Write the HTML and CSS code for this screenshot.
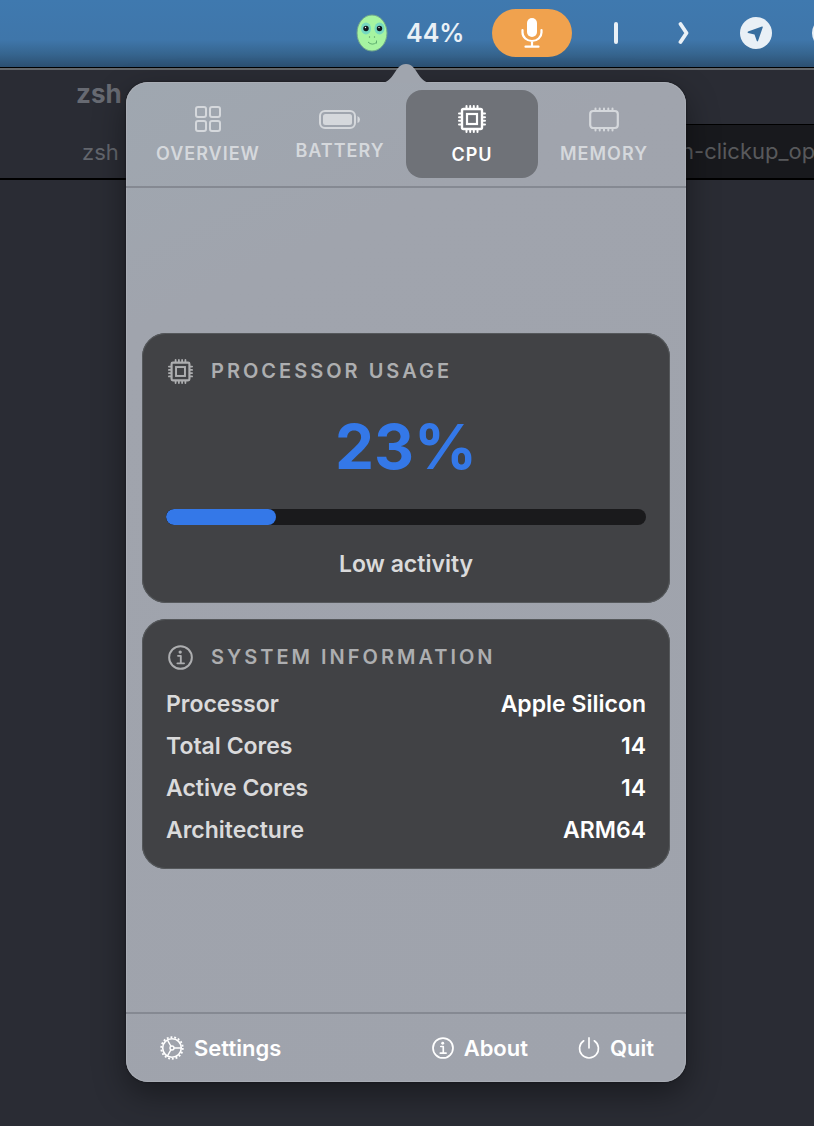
FILE: index.html
```html
<!DOCTYPE html>
<html lang="en">
<head>
<meta charset="utf-8">
<meta name="viewport" content="width=device-width, initial-scale=1">
<title>System Monitor</title>
<link rel="stylesheet" href="styles.css">
</head>
<body>
<svg class="defs" width="0" height="0" aria-hidden="true">
  <symbol id="chip" viewBox="0 0 28 28">
    <g fill="none" stroke="currentColor">
      <rect x="4" y="4" width="20" height="20" rx="1.5" stroke-width="2.4"/>
      <rect x="9" y="9" width="10" height="10" stroke-width="2.2"/>
      <path stroke-width="2" stroke-linecap="round" d="M8.500 1v2M12.200 1v2M15.800 1v2M19.500 1v2M8.500 25v2M12.200 25v2M15.800 25v2M19.500 25v2M1 8.500h2M1 12.200h2M1 15.800h2M1 19.500h2M25 8.500h2M25 12.200h2M25 15.800h2M25 19.500h2"/>
    </g>
  </symbol>
  <symbol id="info" viewBox="0 0 24 24">
    <circle cx="12" cy="12" r="10.9" fill="none" stroke="currentColor" stroke-width="1.9"/>
    <circle cx="11.7" cy="6.8" r="1.6" fill="currentColor"/>
    <path d="M9.6 10.4h2.7v7M9 17.6h6.4" fill="none" stroke="currentColor" stroke-width="1.8" stroke-linecap="round" stroke-linejoin="round"/>
  </symbol>
</svg>

<header class="menubar">
  <svg class="alien" viewBox="0 0 32 38" aria-label="Alien">
    <ellipse cx="16" cy="19" rx="15" ry="18" fill="#a6f4a1" stroke="#6fa58c"/>
    <ellipse cx="10" cy="14.500" rx="5" ry="6" fill="#75d8c0"/>
    <ellipse cx="23.500" cy="14.500" rx="5" ry="6" fill="#75d8c0"/>
    <circle cx="10" cy="14.500" r="2.700" fill="#10171b"/>
    <circle cx="23.500" cy="14.500" r="2.700" fill="#10171b"/>
    <circle cx="9.500" cy="13.500" r=".7" fill="#fff"/><circle cx="23" cy="13.500" r=".7" fill="#fff"/>
    <circle cx="13.500" cy="23" r=".7" fill="#5f9e67"/><circle cx="18.500" cy="23" r=".7" fill="#5f9e67"/>
    <path d="M12 28q4 4 8.500 .5M20.500 26.500v3" fill="none" stroke="#5faf70"/>
  </svg>
  <span class="level">44%</span>
  <button class="mic" aria-label="Microphone">
    <svg viewBox="0 0 22 30" fill="none" stroke="#fff" stroke-width="2.200" stroke-linecap="round">
      <rect x="6" y="0" width="10" height="19" rx="5" fill="#fff" stroke="none"/>
      <path d="M1.500 12v2.500a9.500 8.500 0 0 0 19 0V12M11 23v5.500M4.500 28.700h13"/>
    </svg>
  </button>
  <svg class="divider" viewBox="0 0 4 22"><path d="M2 2v18" stroke="#e9f0f6" stroke-width="4" stroke-linecap="round"/></svg>
  <svg class="chevron" viewBox="0 0 12 22"><path d="M2.500 2 L8.500 11 L2.500 20" fill="none" stroke="#e9f0f6" stroke-width="3.800" stroke-linecap="round" stroke-linejoin="round"/></svg>
  <svg class="round" viewBox="0 0 32 32"><circle cx="16" cy="16" r="16" fill="#e9f0f6"/><path d="M8 14.500 22 9.500q1-.2.800.8L18 24q-.6.900-1.200 0L14.500 17.500 8 16q-1-.8 0-1.500z" fill="#376e9f"/></svg>
  <svg class="round" viewBox="0 0 32 32"><circle cx="16" cy="16" r="16" fill="#e9f0f6"/></svg>
</header>

<main class="terminal">
  <h1 class="window-title">zsh</h1>
  <div class="window-tabs">
    <div class="window-tab current">zsh</div>
    <div class="window-tab other">h-clickup_op</div>
  </div>
</main>

<section class="popover" aria-label="System monitor">
  <svg class="pointer" viewBox="0 0 52 20"><path d="M0 20C15 20 14 1 26 1S37 20 52 20z" fill="#a0a5ae"/></svg>
  <nav class="tabs">
    <button class="tab">
      <svg width="26" height="26" viewBox="0 0 26 26" fill="none" stroke="currentColor" stroke-width="2"><rect x="1" y="1" width="10" height="10" rx="2"/><rect x="15" y="1" width="10" height="10" rx="2"/><rect x="1" y="15" width="10" height="10" rx="2"/><rect x="15" y="15" width="10" height="10" rx="2"/></svg>
      <span>OVERVIEW</span>
    </button>
    <button class="tab">
      <svg width="42" height="19" viewBox="0 0 42 19"><rect x="1" y="1" width="35" height="17" rx="5" fill="none" stroke="currentColor" stroke-width="2"/><rect x="4" y="4" width="29" height="11" rx="2.500" fill="currentColor"/><path d="M38.500 6v7q2.500-1 2.500-3.500T38.500 6z" fill="currentColor"/></svg>
      <span>BATTERY</span>
    </button>
    <button class="tab selected" aria-current="page">
      <svg width="28" height="28"><use href="#chip"/></svg>
      <span>CPU</span>
    </button>
    <button class="tab">
      <svg width="30" height="25" viewBox="0 0 30 25" fill="none" stroke="currentColor" stroke-linecap="round"><rect x="1.200" y="4" width="27.600" height="17" rx="3" stroke-width="2.200"/><path stroke-width="2" d="M6.500 1.500v2M10.700 1.500v2M15 1.500v2M19.300 1.500v2M23.500 1.500v2M6.500 21.500v2M10.700 21.500v2M15 21.500v2M19.300 21.500v2M23.500 21.500v2"/></svg>
      <span>MEMORY</span>
    </button>
  </nav>

  <div class="content">
    <section class="card">
      <h2 class="card-title"><svg class="card-icon" aria-hidden="true"><use href="#chip"/></svg>PROCESSOR USAGE</h2>
      <p class="usage">23%</p>
      <div class="meter" role="progressbar" aria-label="Processor usage" aria-valuenow="23" aria-valuemin="0" aria-valuemax="100"><div class="meter-fill" style="width: 23%"></div></div>
      <p class="activity">Low activity</p>
    </section>
    <section class="card">
      <h2 class="card-title"><svg class="card-icon" aria-hidden="true"><use href="#info"/></svg>SYSTEM INFORMATION</h2>
      <dl class="facts">
        <div class="fact"><dt>Processor</dt><dd>Apple Silicon</dd></div>
        <div class="fact"><dt>Total Cores</dt><dd>14</dd></div>
        <div class="fact"><dt>Active Cores</dt><dd>14</dd></div>
        <div class="fact"><dt>Architecture</dt><dd>ARM64</dd></div>
      </dl>
    </section>
  </div>

  <footer class="actions">
    <button class="action settings">
      <svg viewBox="0 0 24 24" fill="none" stroke="currentColor"><circle cx="12" cy="12" r="9.300" stroke-width="1.600"/><circle cx="12" cy="12" r="10.800" stroke-width="1.800" stroke-dasharray="1.900 1.870"/><circle cx="12" cy="12" r="2" stroke-width="1.400"/><path stroke-width="1.400" d="M14 12h7M11 10.300 7.500 4.200M11 13.700 7.500 19.800"/></svg>
      Settings
    </button>
    <button class="action">
      <svg class="small" viewBox="0 0 24 24"><use href="#info"/></svg>
      About
    </button>
    <button class="action">
      <svg class="small" viewBox="0 0 24 24" fill="none" stroke="currentColor" stroke-width="1.800" stroke-linecap="round"><path d="M12 1v11M6.200 4.100a10.300 10.300 0 1 0 11.600 0"/></svg>
      Quit
    </button>
  </footer>
</section>
</body>
</html>
```
FILE: styles.css
```css
* { box-sizing: border-box; }

body {
  margin: 0;
  min-height: 100vh;
  display: flex;
  flex-direction: column;
  position: relative;
  overflow: hidden;
  background: #2a2c34;
  font-family: Inter, "Liberation Sans", sans-serif;
}

h1, h2, p, dl, dd { margin: 0; }

button {
  border: 0;
  padding: 0;
  background: none;
  color: inherit;
  font: inherit;
}

svg { display: block; flex: none; }

.defs { position: absolute; }

.menubar {
  display: flex;
  align-items: center;
  height: 67px;
  padding: 0 0 2px 356px;
  overflow: hidden;
  background: linear-gradient(#3f79af 0, #3f76aa 40px, #36658f 54px, #2c4f71 67px);
}

.alien { width: 32px; height: 38px; margin-right: 18px; }

.level {
  flex: none;
  width: 56px;
  margin-right: 30px;
  color: #e9f0f6;
  font-size: 25px;
  font-weight: 600;
  line-height: 32px;
  white-space: nowrap;
}

.mic {
  display: flex;
  flex: none;
  align-items: center;
  justify-content: center;
  width: 80px;
  height: 48px;
  border-radius: 24px;
  background: #f0a24e;
}

.mic svg { width: 22px; height: 30px; }
.divider { width: 4px; height: 22px; margin: 0 60px 0 42px; }
.chevron { width: 12px; height: 22px; margin-right: 50px; }
.round { width: 32px; height: 32px; margin-right: 40px; }

.terminal {
  flex: 1;
  border-top: 1px solid #000;
  box-shadow: inset 0 2px #63666a;
}

.window-title {
  padding: 8px 76px 12px;
  color: #676a72;
  font-size: 26px;
  font-weight: 700;
  line-height: 36px;
}

.window-tabs {
  display: grid;
  grid-template-columns: 1fr 1fr;
  border-bottom: 2px solid #000;
}

.window-tab {
  padding-top: 2px;
  color: #63666d;
  font-size: 22px;
  line-height: 52px;
  white-space: nowrap;
}

.current { padding-left: 82px; }

.other {
  padding: 0 0 1px 274px;
  overflow: hidden;
  border-top: 1px solid #000;
  background: #18191d;
  color: #58595c;
}

.popover {
  position: absolute;
  top: 82px;
  bottom: 44px;
  left: 126px;
  width: 560px;
  display: flex;
  flex-direction: column;
  border-radius: 22px;
  background: linear-gradient(155deg, #9fa7b0 0, #a0a4ad 20%, #9fa3ac 100%);
  box-shadow: 0 0 2px #101114, 0 12px 32px #0006, inset 0 0 0 1px #a9adb5;
}

.pointer {
  position: absolute;
  top: -19px;
  left: 254px;
  width: 52px;
  height: 20px;
}

.tabs {
  display: grid;
  grid-template-columns: repeat(4, 1fr);
  padding: 8px 16px;
  border-bottom: 2px solid #858992;
}

.tab {
  display: flex;
  flex-direction: column;
  align-items: center;
  justify-content: center;
  gap: 11px;
  height: 88px;
  padding-top: 3px;
  border-radius: 16px;
  color: #d5d8dc;
  font-size: 18px;
  font-weight: 600;
  line-height: 22px;
  letter-spacing: 1px;
}

.selected { background: #6f7278; color: #fff; }

.content {
  flex: 1;
  display: flex;
  flex-direction: column;
  justify-content: center;
  gap: 16px;
  padding: 2px 16px 0;
}

.card {
  padding: 24px;
  border-radius: 24px;
  background: #414245;
  box-shadow: inset 0 0 0 1px #55585b;
}

.card-title {
  display: flex;
  align-items: center;
  gap: 18px;
  padding-left: 2px;
  color: #adaeb0;
  font-size: 20px;
  font-weight: 600;
  line-height: 28px;
  letter-spacing: 3px;
}

.card-icon { width: 25px; height: 25px; }

.usage {
  margin: 24px 0;
  color: #3478e8;
  font-size: 62px;
  font-weight: 700;
  line-height: 76px;
  text-align: center;
}

.meter {
  height: 16px;
  overflow: hidden;
  border-radius: 8px;
  background: #1a1a1c;
}

.meter-fill {
  height: 100%;
  border-radius: 8px;
  background: #3478e8;
}

.activity {
  margin-top: 24px;
  color: #dadadb;
  font-size: 23px;
  font-weight: 600;
  line-height: 30px;
  text-align: center;
}

.facts {
  display: flex;
  flex-direction: column;
  gap: 12px;
  margin-top: 18px;
  font-size: 23px;
  font-weight: 600;
  line-height: 30px;
}

.fact { display: flex; justify-content: space-between; }
.fact dt { color: #dadadb; }
.fact dd { color: #fff; }

.actions {
  display: flex;
  align-items: center;
  gap: 50px;
  height: 70px;
  padding: 0 32px 0 34px;
  border-top: 2px solid #858992;
  color: #fff;
  font-size: 22px;
  font-weight: 600;
  line-height: 28px;
}

.action { display: flex; align-items: center; gap: 10px; }
.action svg { width: 24px; height: 24px; }
.action .small { width: 22px; height: 22px; }
.settings { margin-right: auto; }
```
